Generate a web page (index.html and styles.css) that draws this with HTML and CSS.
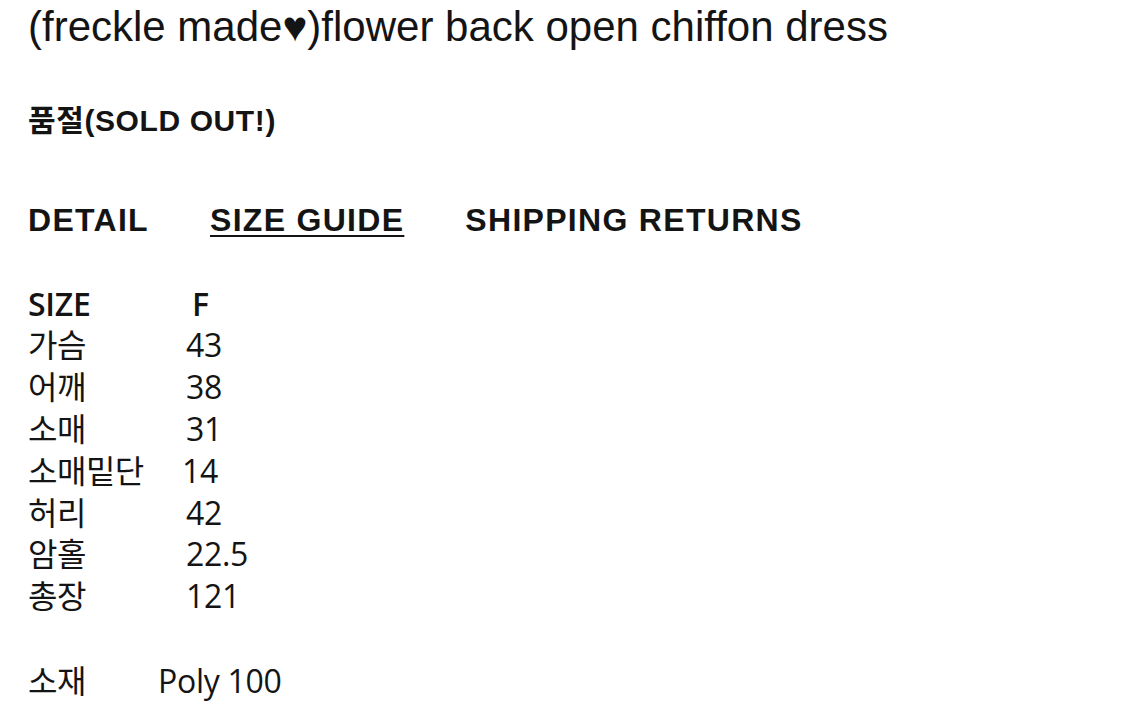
FILE: index.html
```html
<!DOCTYPE html>
<html lang="ko">
<head>
<meta charset="utf-8">
<title>(freckle made♥)flower back open chiffon dress</title>
<link rel="stylesheet" href="styles.css">
</head>
<body>
<main class="product">
  <h1 class="title">(freckle made♥)flower back open chiffon dress</h1>
  <p class="status">품절(SOLD OUT!)</p>
  <nav class="tabs">
    <span class="tab">DETAIL</span>
    <span class="tab active">SIZE GUIDE</span>
    <span class="tab">SHIPPING RETURNS</span>
  </nav>
  <div class="sizes">
    <span class="head">SIZE</span><span class="head val-f">F</span>
    <span class="label">가슴</span><span class="val">43</span>
    <span class="label">어깨</span><span class="val">38</span>
    <span class="label">소매</span><span class="val">31</span>
    <span class="label">소매밑단</span><span class="val val-narrow">14</span>
    <span class="label">허리</span><span class="val">42</span>
    <span class="label">암홀</span><span class="val">22.5</span>
    <span class="label">총장</span><span class="val">121</span>
  </div>
  <div class="material">
    <span class="label">소재</span><span class="val">Poly 100</span>
  </div>
</main>
</body>
</html>
```
FILE: styles.css
```css
html, body {
  margin: 0;
  padding: 0;
  background: #ffffff;
}
body {
  color: #141414;
  font-family: "Liberation Sans", Arial, "Noto Sans CJK KR", sans-serif;
}
.product {
  padding: 2px 0 0 28px;
}
.title {
  margin: 0;
  font-size: 42px;
  font-weight: normal;
  line-height: 50px;
  letter-spacing: 0;
}
.status {
  margin: 51px 0 0;
  font-size: 30px;
  font-weight: bold;
  line-height: 36px;
  letter-spacing: 0.6px;
}
.tabs {
  display: flex;
  gap: 61px;
  margin-top: 62px;
  font-size: 32px;
  font-weight: bold;
  line-height: 38px;
  letter-spacing: 1.3px;
}
.tab.active {
  text-decoration: underline;
  text-decoration-thickness: 2px;
  text-underline-offset: 4px;
}
.sizes {
  display: grid;
  grid-template-columns: 158px auto;
  grid-template-rows: 38px;
  grid-auto-rows: 41.9px;
  align-items: baseline;
  margin-top: 46px;
  font-size: 32px;
  line-height: 41.9px;
}
.label {
  font-family: "Noto Sans CJK KR", "Open Sans", sans-serif;
  letter-spacing: -0.5px;
}
.val {
  font-family: "Open Sans", "Noto Sans CJK KR", sans-serif;
  letter-spacing: -0.3px;
}
.head {
  font-family: "Open Sans", "Noto Sans CJK KR", sans-serif;
  font-weight: 600;
  line-height: 38px;
  letter-spacing: -0.3px;
}
.val-f {
  padding-left: 6px;
}
.val-narrow {
  margin-left: -4px;
}
.material {
  display: grid;
  grid-template-columns: 130px auto;
  align-items: baseline;
  margin-top: 43px;
  font-size: 32px;
  line-height: 41.9px;
}
```
